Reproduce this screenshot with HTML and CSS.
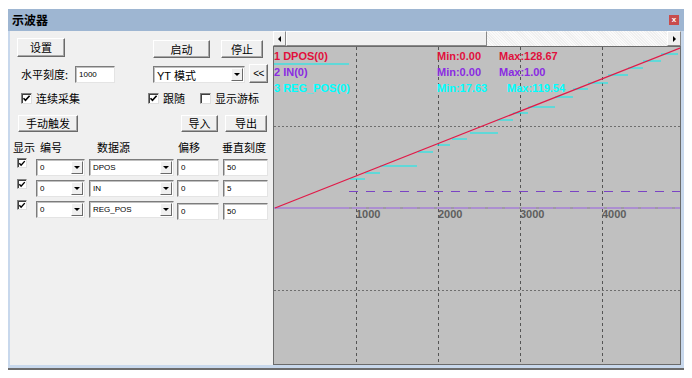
FILE: index.html
```html
<!DOCTYPE html>
<html lang="zh">
<head>
<meta charset="utf-8">
<title>示波器</title>
<link rel="stylesheet" href="styles.css">
</head>
<body>
<div class="window">
  <div class="titlebar">
    <span class="title">示波器</span>
    <span class="close">x</span>
  </div>
  <div class="main">
    <div class="panel">
      <div class="row row1">
        <button class="btn btn-set">设置</button>
        <div class="grow"></div>
        <button class="btn btn-start">启动</button>
        <button class="btn btn-stop">停止</button>
      </div>
      <div class="row row2">
        <span class="lbl lbl-scale">水平刻度:</span>
        <span class="field f-scale">1000</span>
        <span class="combo c-mode"><span class="ctext cjk">YT 模式</span><span class="drop"><i></i></span></span>
        <button class="btn btn-back">&lt;&lt;</button>
      </div>
      <div class="row row3">
        <span class="chk on"><svg viewBox="0 0 9 9"><path d="M1.5 4.2 L3.5 6.4 L7.6 1.8"/></svg></span>
        <span class="lbl lbl-cont">连续采集</span>
        <span class="chk on"><svg viewBox="0 0 9 9"><path d="M1.5 4.2 L3.5 6.4 L7.6 1.8"/></svg></span>
        <span class="lbl lbl-follow">跟随</span>
        <span class="chk"></span>
        <span class="lbl">显示游标</span>
      </div>
      <div class="row row4">
        <button class="btn btn-trig">手动触发</button>
        <div class="grow"></div>
        <button class="btn btn-imp">导入</button>
        <button class="btn btn-exp">导出</button>
      </div>
      <div class="table">
        <span class="th th1">显示</span>
        <span class="th th2">编号</span>
        <span class="th th3">数据源</span>
        <span class="th th4">偏移</span>
        <span class="th th5">垂直刻度</span>

        <span class="chk on tchk"><svg viewBox="0 0 9 9"><path d="M1.5 4.2 L3.5 6.4 L7.6 1.8"/></svg></span>
        <span class="combo c-num"><span class="ctext">0</span><span class="drop"><i></i></span></span>
        <span class="combo c-src"><span class="ctext">DPOS</span><span class="drop"><i></i></span></span>
        <span class="field f-off">0</span>
        <span class="field f-vs">50</span>

        <span class="chk on tchk"><svg viewBox="0 0 9 9"><path d="M1.5 4.2 L3.5 6.4 L7.6 1.8"/></svg></span>
        <span class="combo c-num"><span class="ctext">0</span><span class="drop"><i></i></span></span>
        <span class="combo c-src"><span class="ctext">IN</span><span class="drop"><i></i></span></span>
        <span class="field f-off">0</span>
        <span class="field f-vs">5</span>

        <span class="chk on tchk"><svg viewBox="0 0 9 9"><path d="M1.5 4.2 L3.5 6.4 L7.6 1.8"/></svg></span>
        <span class="combo c-num"><span class="ctext">0</span><span class="drop"><i></i></span></span>
        <span class="combo c-src"><span class="ctext">REG_POS</span><span class="drop"><i></i></span></span>
        <span class="field f-off low">0</span>
        <span class="field f-vs low">50</span>
      </div>
    </div>
    <div class="scope">
      <div class="scrollbar">
        <span class="sbtn"><i class="al"></i></span>
        <span class="thumb"></span>
        <span class="track"></span>
        <span class="sbtn"><i class="ar"></i></span>
      </div>
      <div class="plot">
        <svg class="chart" width="406" height="317" viewBox="274 47 406 317">
          <g class="vgrid">
            <line x1="356.5" y1="47" x2="356.5" y2="364"/>
            <line x1="438.5" y1="47" x2="438.5" y2="364"/>
            <line x1="520.5" y1="47" x2="520.5" y2="364"/>
            <line x1="602.5" y1="47" x2="602.5" y2="364"/>
          </g>
          <g class="hgrid">
            <line x1="274" y1="126.5" x2="680" y2="126.5"/>
            <line x1="274" y1="290.5" x2="680" y2="290.5"/>
          </g>
          <line class="axis" x1="274" y1="208" x2="680" y2="208"/>
          <line class="axis-dash" x1="349" y1="208" x2="680" y2="208"/>
          <line class="trig" x1="349" y1="191.5" x2="680" y2="191.5"/>
          <g class="axlbl">
            <text x="356" y="218">1000</text>
            <text x="438" y="218">2000</text>
            <text x="520" y="218">3000</text>
            <text x="602" y="218">4000</text>
          </g>
          <g class="steps">
            <line x1="274" y1="64" x2="349" y2="64"/>
            <line x1="350" y1="179" x2="365" y2="179"/>
            <line x1="365" y1="173" x2="380" y2="173"/>
            <line x1="380" y1="166" x2="417" y2="166"/>
            <line x1="418" y1="152" x2="433" y2="152"/>
            <line x1="437" y1="145" x2="450" y2="145"/>
            <line x1="452" y1="139" x2="467" y2="139"/>
            <line x1="470" y1="133" x2="498" y2="133"/>
            <line x1="497" y1="120" x2="513" y2="120"/>
            <line x1="513" y1="113" x2="528" y2="113"/>
            <line x1="528" y1="107" x2="555" y2="107"/>
            <line x1="555" y1="97" x2="573" y2="97"/>
            <line x1="573" y1="89" x2="588" y2="89"/>
            <line x1="588" y1="83" x2="608" y2="83"/>
            <line x1="608" y1="75" x2="628" y2="75"/>
            <line x1="628" y1="68" x2="643" y2="68"/>
            <line x1="643" y1="61" x2="661" y2="61"/>
            <line x1="661" y1="54" x2="678" y2="54"/>
          </g>
          <line class="dpos" x1="275" y1="208" x2="680" y2="48"/>
          <g class="legend">
            <text class="red" x="274" y="59.5">1 DPOS(0)</text>
            <text class="pur" x="274" y="75.5">2 IN(0)</text>
            <text class="cyn" x="274" y="91.5">3 REG_POS(0)</text>
            <text class="red" x="437" y="59.5">Min:0.00</text>
            <text class="red" x="499" y="59.5">Max:128.67</text>
            <text class="pur" x="437" y="75.5">Min:0.00</text>
            <text class="pur" x="499" y="75.5">Max:1.00</text>
            <text class="cyn" x="437" y="91.5">Min:17.63</text>
            <text class="cyn" x="507" y="91.5">Max:119.54</text>
          </g>
        </svg>
      </div>
    </div>
  </div>
</div>
</body>
</html>
```

FILE: styles.css
```css
* { box-sizing: border-box; }
body {
  margin: 0;
  background: #ffffff;
  font-family: "Noto Sans CJK SC", "Liberation Sans", sans-serif;
  font-size: 11px;
  color: #000;
}
.window {
  margin: 9px 0 0 8px;
  width: 676px;
  background: #c8d8ec;
  border-bottom: 2px solid #6c6c6c;
}
.titlebar {
  height: 22px;
  background: #9eb6d2;
  display: flex;
  align-items: center;
  justify-content: space-between;
  padding: 0 5px 0 4px;
}
.title {
  font-weight: bold;
  font-size: 12px;
  line-height: 12px;
}
.close {
  width: 10px;
  height: 10px;
  background: #c84c4c;
  color: #fff;
  font: bold 8px/9px "Liberation Sans", sans-serif;
  text-align: center;
}
.main {
  display: flex;
  height: 337px;
  padding: 0 3px 3px 2px;
}
.panel {
  width: 263px;
  background: #f0f0f0;
  display: flex;
  flex-direction: column;
  padding: 0 5px 0 7px;
}
.row { display: flex; align-items: flex-start; }
.grow { flex: 1; }
.btn {
  font-family: "Noto Sans CJK SC", sans-serif;
  font-size: 11px;
  line-height: 1;
  padding: 0;
  margin: 0;
  background: #f0f0f0;
  border: 1px solid;
  border-color: #ffffff #6a6a6a #6a6a6a #ffffff;
  box-shadow: inset -1px -1px 0 #a8a8a8;
  color: #000;
  display: flex;
  align-items: center;
  justify-content: center;
}
.row1 { margin-top: 7px; height: 20px; }
.btn-set { width: 48px; height: 19px; }
.btn-start { width: 57px; height: 18px; margin-top: 2px; }
.btn-stop { width: 42px; height: 18px; margin-top: 2px; margin-left: 11px; margin-right: 5px; }

.row2 { margin-top: 6px; height: 19px; align-items: center; }
.lbl { white-space: nowrap; line-height: 12px; }
.lbl-scale { margin-left: 4px; width: 54px; margin-top: 1px; }
.field {
  display: flex;
  align-items: center;
  background: #fff;
  border: 1px solid;
  border-color: #7c7c7c #e4e4e4 #e4e4e4 #7c7c7c;
  box-shadow: inset 1px 1px 0 #c0c0c0;
  font: 8px "Liberation Sans", sans-serif;
  padding-left: 3px;
  height: 17px;
}
.f-scale { width: 40px; margin-top: 2px; }
.combo {
  display: flex;
  align-items: center;
  background: #fff;
  border: 1px solid;
  border-color: #7c7c7c #e4e4e4 #e4e4e4 #7c7c7c;
  box-shadow: inset 1px 1px 0 #c0c0c0;
  height: 17px;
  padding: 1px 1px 1px 2px;
}
.ctext {
  flex: 1;
  font: 8px "Liberation Sans", sans-serif;
  padding-left: 1px;
}
.ctext.cjk { font: 11px "Liberation Sans", "Noto Sans CJK SC", sans-serif; }
.drop {
  width: 12px;
  height: 13px;
  background: #f0f0f0;
  border: 1px solid;
  border-color: #fff #6a6a6a #6a6a6a #fff;
  display: flex;
  align-items: center;
  justify-content: center;
}
.drop i {
  width: 0;
  height: 0;
  border-left: 3px solid transparent;
  border-right: 3px solid transparent;
  border-top: 3px solid #000;
}
.c-mode { width: 92px; margin-left: 38px; margin-top: 2px; }
.btn-back {
  width: 19px;
  height: 19px;
  margin-left: 4px;
  font: 10px "Liberation Sans", sans-serif;
  letter-spacing: -0.5px;
}

.row3 { margin-top: 8px; height: 14px; align-items: center; }
.chk {
  width: 11px;
  height: 11px;
  background: #fff;
  border: 1px solid;
  border-color: #808080 #e0e0e0 #e0e0e0 #808080;
  box-shadow: inset 1px 1px 0 #404040;
  display: flex;
  align-items: center;
  justify-content: center;
  flex: none;
}
.chk svg { width: 9px; height: 9px; }
.chk path { fill: none; stroke: #000; stroke-width: 1.6; }
.row3 .chk { margin-left: 4px; margin-right: 4px; }
.row3 .chk:first-child { margin-left: 4px; }
.lbl-cont { width: 108px; }
.lbl-follow { width: 33px; }

.row4 { margin-top: 10px; height: 17px; }
.btn-trig { width: 60px; height: 17px; margin-left: 1px; }
.btn-imp { width: 37px; height: 17px; }
.btn-exp { width: 42px; height: 17px; margin-left: 7px; margin-right: 1px; }

.table {
  margin-top: 9px;
  margin-left: -4px;
  display: grid;
  grid-template-columns: 23px 53px 88px 46px 45px;
  grid-auto-rows: auto;
  row-gap: 4px;
  align-items: start;
}
.th { line-height: 12px; white-space: nowrap; margin-bottom: 2px; }
.th2 { padding-left: 4px; }
.th3 { padding-left: 8px; }
.th4 { padding-left: 1px; }
.th5 { margin-left: -1px; }
.tchk { margin-left: 4px; margin-top: -1px; width: 10px; height: 10px; }
.c-num { width: 49px; }
.c-src { width: 85px; }
.f-off { width: 42px; }
.f-vs { width: 45px; }
.field.low { margin-top: 2px; }

.scope {
  width: 408px;
  display: flex;
  flex-direction: column;
}
.scrollbar {
  height: 15px;
  display: flex;
  background: #f6f6f6;
}
.sbtn {
  width: 14px;
  height: 15px;
  background: #f0f0f0;
  border: 1px solid;
  border-color: #fff #8a8a8a #8a8a8a #fff;
  display: flex;
  align-items: center;
  justify-content: center;
}
.sbtn:first-child { width: 13px; }
.al, .ar { width: 0; height: 0; border-top: 3px solid transparent; border-bottom: 3px solid transparent; }
.al { border-right: 3px solid #000; }
.ar { border-left: 3px solid #000; }
.thumb {
  width: 201px;
  height: 15px;
  background: #f0f0f0;
  border: 1px solid;
  border-color: #fff #8a8a8a #8a8a8a #fff;
}
.track {
  flex: 1;
  background: repeating-linear-gradient(45deg, #fafafa 0 1px, #efefef 1px 2px);
}
.plot {
  flex: 1;
  border: 1px solid #6b6b6b;
  background: #c0c0c0;
  overflow: hidden;
}
.chart { display: block; }
.vgrid line { stroke: #555; stroke-width: 1; stroke-dasharray: 3 3; }
.hgrid line { stroke: #6e6e6e; stroke-width: 1; stroke-dasharray: 2 2; }
.axis { stroke: #a67fd6; stroke-width: 1.6; }
.axis-dash { stroke: #9a9a9a; stroke-width: 1.6; stroke-dasharray: 3 14; }
.trig { stroke: #7a44c4; stroke-width: 1; stroke-dasharray: 9 8; }
.axlbl text { font: bold 11px "Liberation Sans", sans-serif; fill: #5e5e5e; }
.steps line { stroke: #00f0f0; stroke-width: 1; }
.dpos { stroke: #e01a48; stroke-width: 1.3; }
.legend text { font: bold 11px "Liberation Sans", sans-serif; }
.legend .red { fill: #e0103c; }
.legend .pur { fill: #8a2be2; }
.legend .cyn { fill: #00ffff; }
```
